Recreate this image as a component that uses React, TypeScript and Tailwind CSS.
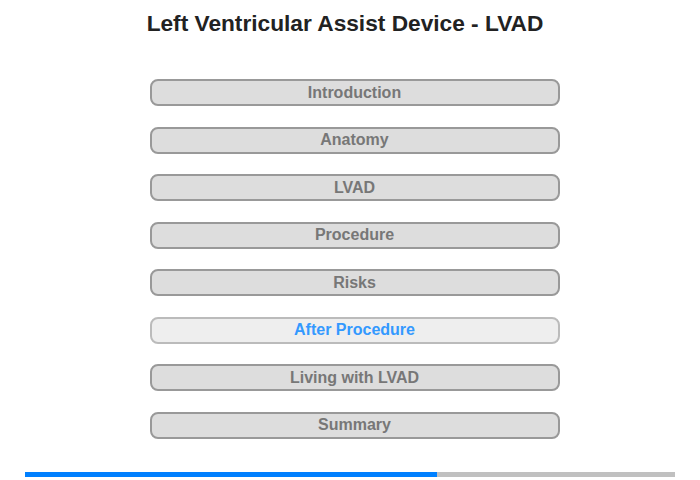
import React from 'react';

const items = [
  'Introduction',
  'Anatomy',
  'LVAD',
  'Procedure',
  'Risks',
  'After Procedure',
  'Living with LVAD',
  'Summary',
];

const active = 'After Procedure';

export default function App() {
  return (
    <div className="w-[700px] h-[480px] bg-white flex flex-col items-center font-['Liberation_Sans',Arial,sans-serif]">
      <h1 className="mt-[9px] text-[22.7px] leading-[28px] font-bold text-[#222] pr-[10px]">
        Left Ventricular Assist Device - LVAD
      </h1>

      <div className="mt-[42px] ml-[9px] flex flex-col gap-[20.5px] w-[410px]">
        {items.map((item) => {
          const isActive = item === active;
          return (
            <div
              key={item}
              className={`h-[27px] rounded-[8px] border-2 flex items-center justify-center text-[16px] font-bold ${
                isActive
                  ? 'bg-[#eeeeee] border-[#bbbbbb] text-[#3399ff]'
                  : 'bg-[#dddddd] border-[#999999] text-[#777777]'
              }`}
            >
              {item}
            </div>
          );
        })}
      </div>

      <div className="mt-[33px] w-[650px] h-[5px] flex">
        <div className="w-[412px] bg-[#0080ff]" />
        <div className="flex-1 bg-[#c0c0c0]" />
      </div>
    </div>
  );
}
